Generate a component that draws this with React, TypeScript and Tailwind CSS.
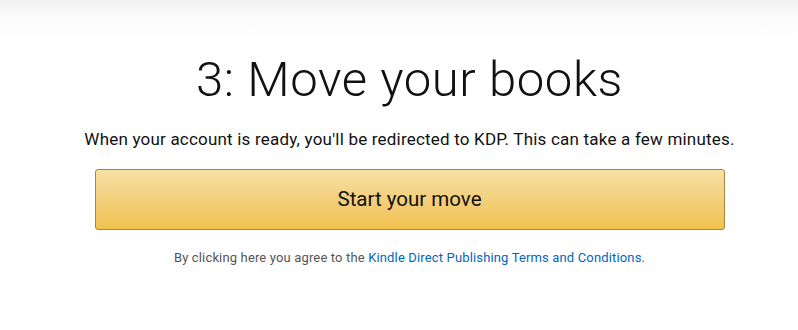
export default function App() {
  return (
    <div
      className="w-[798px] h-[330px] bg-white bg-gradient-to-b from-[#f0f0f0] via-[#fbfbfb] via-[5%] to-white to-[13%] text-[#111]"
      style={{ fontFamily: "Roboto, 'Noto Sans', Arial, sans-serif" }}
    >
      <div className="flex flex-col items-center pt-[52px] pl-[21px]">
        <h1 className="text-[49px] leading-[56px] font-light tracking-[0.6px]">
          3: Move your books
        </h1>
        <p className="mt-[19px] text-[17px] leading-[24px] tracking-[0.2px]">
          When your account is ready, you'll be redirected to KDP. This can take a few minutes.
        </p>
        <button className="mt-[18px] w-[630px] h-[61px] rounded-[3px] border border-[#a88734] bg-gradient-to-b from-[#f7dfa5] to-[#f0c14b] text-[20.5px] text-[#111]">
          Start your move
        </button>
        <p className="mt-[19px] text-[13px] leading-[18px] tracking-[0.15px] text-[#555]">
          By clicking here you agree to the{" "}
          <a className="text-[#0066c0]" href="#">
            Kindle Direct Publishing Terms and Conditions
          </a>
          .
        </p>
      </div>
    </div>
  );
}
